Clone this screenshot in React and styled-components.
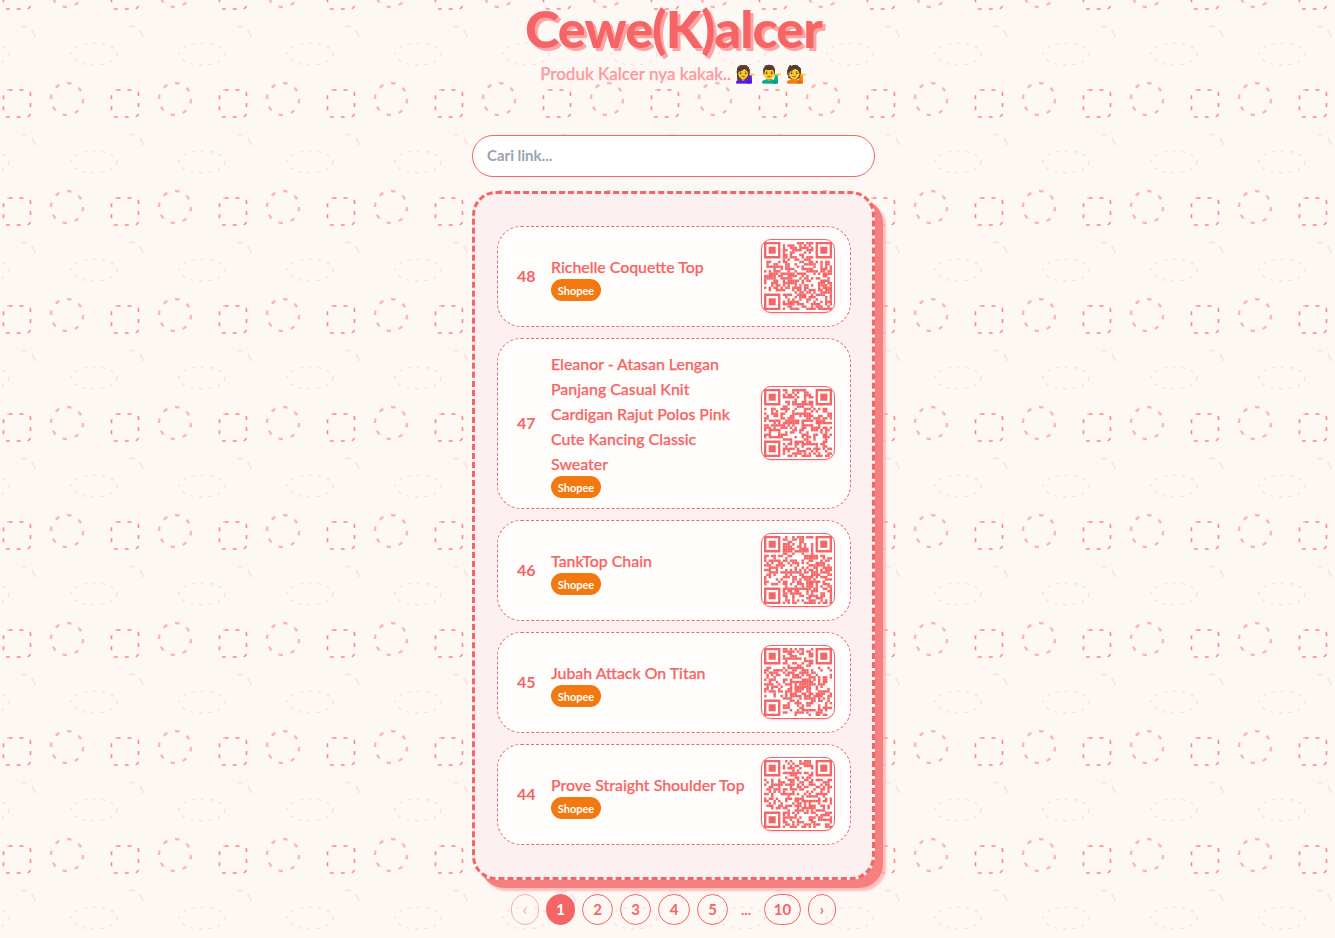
import styled, { createGlobalStyle } from "styled-components";

const pattern = `<svg xmlns='http://www.w3.org/2000/svg' width='108' height='108'><g fill='none'><rect x='3.5' y='90' width='27' height='27' rx='4' stroke='#ff8686' stroke-width='1.6' stroke-dasharray='4 7' stroke-dashoffset='-1'/><rect x='3.5' y='-18' width='27' height='27' rx='4' stroke='#ff8686' stroke-width='1.6' stroke-dasharray='4 7' stroke-dashoffset='-1'/><circle cx='67' cy='99' r='16' stroke='#fcb6b6' stroke-width='2.4' stroke-dasharray='4.5 8'/><circle cx='67' cy='-9' r='16' stroke='#fcb6b6' stroke-width='2.4' stroke-dasharray='4.5 8'/><ellipse cx='94' cy='54' rx='23' ry='11' stroke='#fbdada' stroke-width='1.2' stroke-dasharray='3 6'/><ellipse cx='-14' cy='54' rx='23' ry='11' stroke='#fbdada' stroke-width='1.2' stroke-dasharray='3 6'/><path d='M21 26.5h6M32 30l3.5 7' stroke='#fbe3e3' stroke-width='2'/></g></svg>`;

const GlobalStyle = createGlobalStyle`
  * {
    box-sizing: border-box;
  }
  html, body {
    margin: 0;
    padding: 0;
  }
  body {
    background-color: #fef8f4;
    background-image: url("data:image/svg+xml,${encodeURIComponent(pattern)}");
    font-family: "Lato", "Noto Sans", sans-serif;
  }
`;

const Page = styled.div`
  height: 938px;
  overflow: hidden;
  padding-left: 12px;
  display: flex;
  flex-direction: column;
  align-items: center;
`;
const Title = styled.h1`
  margin: 0;
  height: 56px;
  font-size: 52px;
  line-height: 56px;
  font-weight: 900;
  letter-spacing: -0.9px;
  color: #f56565;
  text-shadow: 3px 3px 0 #fca5a5;
  white-space: nowrap;
`;
const Subtitle = styled.p`
  margin: 6px 0 0;
  height: 24px;
  font-size: 17px;
  line-height: 24px;
  font-weight: 500;
  color: #fb9a9f;
  -webkit-text-stroke: 0.25px #fb9a9f;
`;
const Search = styled.input`
  margin-top: 49px;
  width: 403px;
  height: 42px;
  padding: 0 14px 3px;
  border: 1px solid #f56565;
  border-radius: 999px;
  background: #fff;
  font-family: inherit;
  font-size: 15px;
  font-weight: 700;
  outline: none;

  &::placeholder {
    color: #9ca3af;
    opacity: 1;
  }
`;
const Card = styled.section`
  margin-top: 14px;
  width: 403px;
  padding: 32px 21px 32px 22px;
  display: flex;
  flex-direction: column;
  gap: 11px;
  background: #fdf0f1;
  border: 3px dashed #f56565;
  border-radius: 24px;
  box-shadow: 8px 8px 0 #f58080, 11px 11px 2px rgba(252, 165, 165, 0.7);
`;
const Item = styled.article`
  display: flex;
  align-items: center;
  padding: 12px 15px 13px 19px;
  background: #fffdfc;
  border: 1px dashed #f56565;
  border-radius: 24px;
`;
const Rank = styled.span`
  width: 34px;
  flex: none;
  padding-bottom: 2px;
  font-size: 16px;
  font-weight: 700;
  color: #f56565;
`;
const Body = styled.div`
  flex: 1;
  min-width: 0;
  padding-right: 8px;
`;
const Name = styled.h2`
  margin: 0;
  font-size: 15.9px;
  line-height: 25px;
  font-weight: 500;
  color: #f56565;
  -webkit-text-stroke: 0.25px #f56565;
`;
const Badge = styled.span`
  display: flex;
  align-items: center;
  justify-content: center;
  width: 50px;
  height: 22px;
  margin-bottom: -3px;
  border-radius: 999px;
  background: #f2780f;
  color: #fff;
  font-size: 11px;
  font-weight: 700;
`;
const QrBox = styled.div`
  flex: none;
  width: 74px;
  height: 74px;
  padding: 2px;
  background: #fff;
  border: 1.5px solid #f56565;
  border-radius: 10px;
  box-shadow: 0 1px 2px rgba(245, 101, 101, 0.25);

  & svg {
    display: block;
    width: 100%;
    height: 100%;
  }
`;
const Pager = styled.nav`
  margin-top: 14px;
  display: flex;
  align-items: center;
  gap: 7px;
`;
const PageButton = styled.button`
  width: ${(p) => p.$w}px;
  height: 31px;
  padding: 0 0 2px;
  border: 1px solid #f56565;
  border-radius: 999px;
  background: ${(p) => (p.$active ? "#f56565" : "transparent")};
  color: ${(p) => (p.$active ? "#fff" : "#f56565")};
  opacity: ${(p) => (p.disabled ? 0.5 : 1)};
  font-family: inherit;
  font-size: 15px;
  font-weight: 700;
`;
const Dots = styled.span`
  width: 22px;
  text-align: center;
  font-size: 14px;
  font-weight: 700;
  color: #f56565;
`;

const SIZE = 29;

function inFinder(x, y, ox, oy) {
  return x >= ox && x < ox + 8 && y >= oy && y < oy + 8;
}

// stand-in matrix, same size and finder marks as the real codes
function buildCells(seed) {
  let s = seed;
  const next = () => {
    s = (s * 1664525 + 1013904223) >>> 0;
    return (s >>> 16) / 65536;
  };
  const cells = [];
  for (let y = 0; y < SIZE; y++) {
    for (let x = 0; x < SIZE; x++) {
      const r = next();
      if (inFinder(x, y, 0, 0) || inFinder(x, y, SIZE - 8, 0) || inFinder(x, y, 0, SIZE - 8)) continue;
      if (r > 0.46) cells.push([x, y]);
    }
  }
  return cells;
}

const Finder = ({ x, y }) => (
  <g fill="#f56565">
    <path d={`M${x} ${y}h7v7h-7z M${x + 1} ${y + 1}v5h5v-5z`} fillRule="evenodd" />
    <rect x={x + 2} y={y + 2} width="3" height="3" />
  </g>
);

const Qr = ({ seed }) => (
  <QrBox>
    <svg viewBox={`0 0 ${SIZE} ${SIZE}`}>
      {buildCells(seed).map(([x, y]) => (
        <rect key={`${x}-${y}`} x={x} y={y} width="1.05" height="1.05" fill="#f56565" />
      ))}
      <Finder x={0} y={0} />
      <Finder x={SIZE - 7} y={0} />
      <Finder x={0} y={SIZE - 7} />
    </svg>
  </QrBox>
);

const products = [
  { id: 48, name: "Richelle Coquette Top" },
  { id: 47, name: "Eleanor - Atasan Lengan Panjang Casual Knit Cardigan Rajut Polos Pink Cute Kancing Classic Sweater" },
  { id: 46, name: "TankTop Chain" },
  { id: 45, name: "Jubah Attack On Titan" },
  { id: 44, name: "Prove Straight Shoulder Top" },
];

const pages = [
  { label: "1", w: 29, active: true },
  { label: "2", w: 31 },
  { label: "3", w: 31 },
  { label: "4", w: 32 },
  { label: "5", w: 31 },
];

export default function App() {
  return (
    <>
      <GlobalStyle />
      <Page>
        <Title>Cewe(K)alcer</Title>
        <Subtitle>Produk Kalcer nya kakak.. 💁‍♀️ 💁‍♂️ 💁</Subtitle>
        <Search placeholder="Cari link..." />
        <Card>
          {products.map((p) => (
            <Item key={p.id}>
              <Rank>{p.id}</Rank>
              <Body>
                <Name>{p.name}</Name>
                <Badge>Shopee</Badge>
              </Body>
              <Qr seed={p.id * 7919} />
            </Item>
          ))}
        </Card>
        <Pager>
          <PageButton $w={28} disabled>‹</PageButton>
          {pages.map((p) => (
            <PageButton key={p.label} $w={p.w} $active={p.active}>{p.label}</PageButton>
          ))}
          <Dots>...</Dots>
          <PageButton $w={37}>10</PageButton>
          <PageButton $w={28}>›</PageButton>
        </Pager>
      </Page>
    </>
  );
}
